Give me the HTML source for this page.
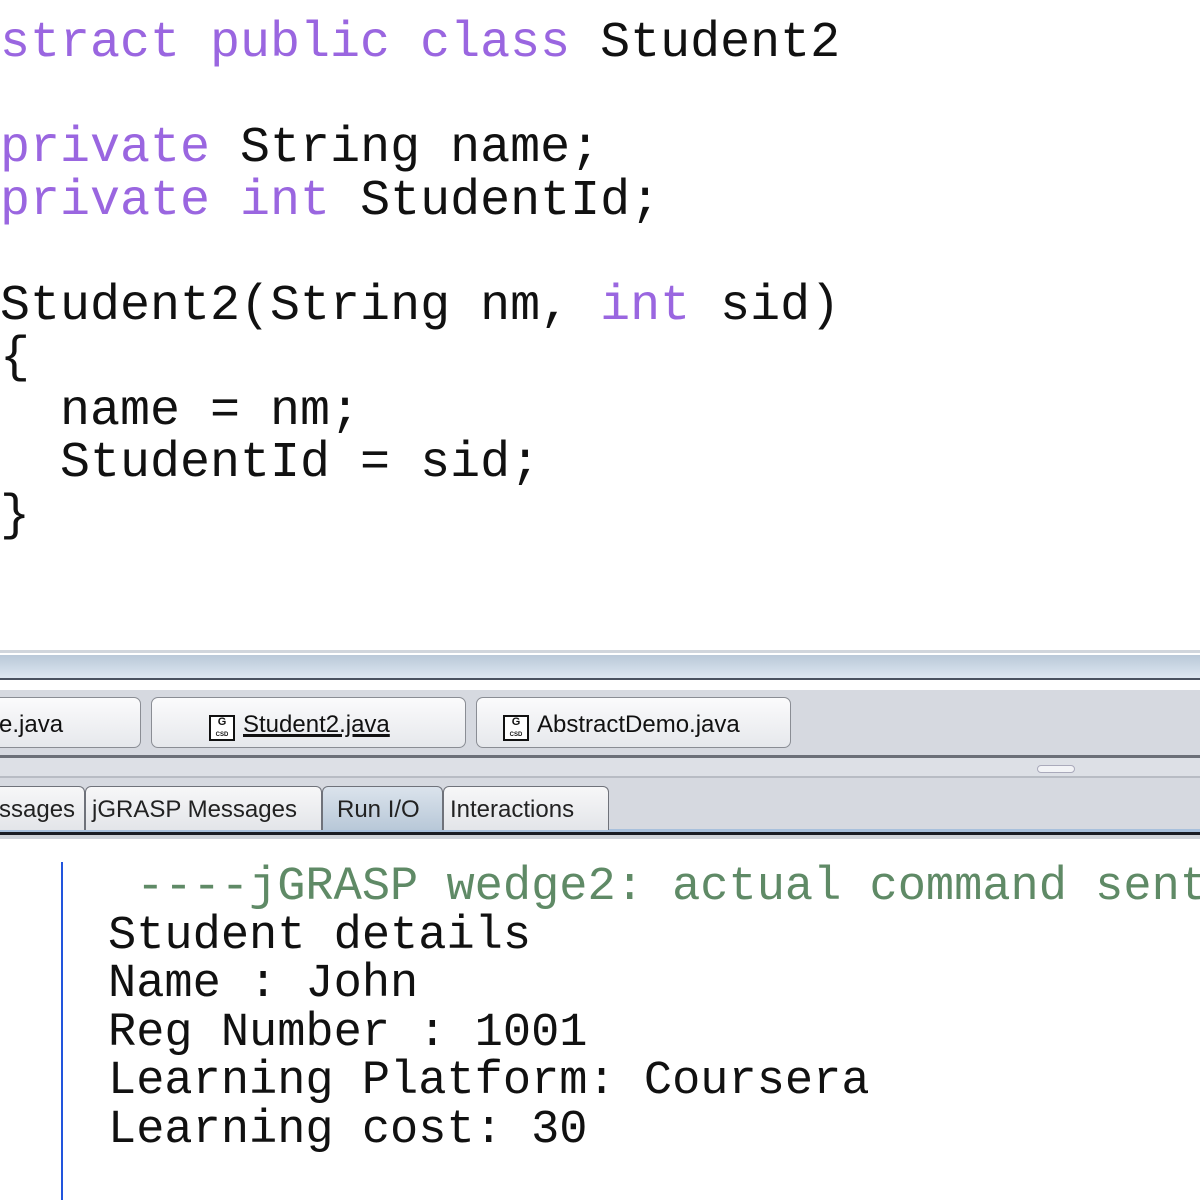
<!DOCTYPE html>
<html><head><style>
body{margin:0;width:1200px;height:1200px;overflow:hidden;background:#fff;position:relative;font-family:"Liberation Mono",monospace}
.code{position:absolute;left:0;top:18px;font-size:50px;line-height:52.5px;white-space:pre;color:#111}
.k{color:#9a66e0}
.abs{position:absolute}
.btn{position:absolute;top:697px;height:51px;border:1px solid #8a8d94;border-radius:7px;background:linear-gradient(#fbfbfc,#e6e8ec);font-family:"Liberation Sans",sans-serif;font-size:24px;line-height:53px;color:#111;box-sizing:border-box}
.ic{display:inline-block;width:26px;height:26px;border:2px solid #111;box-sizing:border-box;vertical-align:-4px;margin-right:8px;font-size:11px;line-height:11px;text-align:center;background:#fff;font-weight:bold}
.tab{position:absolute;top:786px;height:44px;border:1px solid #6f727a;border-bottom:none;border-radius:6px 6px 0 0;background:linear-gradient(#f7f7f8,#e3e5e9);font-family:"Liberation Sans",sans-serif;font-size:24px;line-height:46px;color:#222;box-sizing:border-box;padding-left:6px}
.out{position:absolute;left:108px;top:864px;font-size:47px;line-height:48.5px;white-space:pre;color:#111}
</style></head><body>
<div class="code"><span class="k">stract public class</span> Student2

<span class="k">private</span> String name;
<span class="k">private int</span> StudentId;

Student2(String nm, <span class="k">int</span> sid)
{
  name = nm;
  StudentId = sid;
}</div>
<div class="abs" style="left:0;top:650px;width:1200px;height:3px;background:#d0d5dc"></div>
<div class="abs" style="left:0;top:655px;width:1200px;height:24px;background:linear-gradient(#b9c8d8,#dfe8f2)"></div>
<div class="abs" style="left:0;top:678px;width:1200px;height:2px;background:#4a5260"></div>
<div class="abs" style="left:0;top:682px;width:1200px;height:8px;background:#fff"></div>
<div class="abs" style="left:0;top:690px;width:1200px;height:66px;background:#d6d9e0"></div>
<div class="abs" style="left:0;top:755px;width:1200px;height:3px;background:#6b6f78"></div>
<div class="abs" style="left:0;top:758px;width:1200px;height:20px;background:#dde0e6"></div>
<div class="abs" style="left:1037px;top:765px;width:36px;height:6px;border:1px solid #aab;border-radius:4px;background:#f2f3f6"></div>
<div class="abs" style="left:0;top:776px;width:1200px;height:2px;background:#b8bcc4"></div>
<div class="abs" style="left:0;top:778px;width:1200px;height:54px;background:#d6d9e0"></div>
<div class="abs" style="left:0;top:829px;width:1200px;height:3px;background:#a8c0dc"></div>
<div class="abs" style="left:0;top:832px;width:1200px;height:3px;background:#1a1d24"></div>
<div class="abs" style="left:0;top:835px;width:1200px;height:4px;background:#d0d4da"></div>

<div class="btn" style="left:-10px;width:151px;padding-left:8px">e.java</div>
<div class="btn" style="left:151px;width:315px;padding-left:57px"><span class="ic">G<br><span style="font-size:6px">CSD</span></span><span style="text-decoration:underline;text-decoration-thickness:3px">Student2.java</span></div>
<div class="btn" style="left:476px;width:315px;padding-left:26px"><span class="ic">G<br><span style="font-size:6px">CSD</span></span>AbstractDemo.java</div>

<div class="tab" style="left:-10px;width:95px;padding-left:8px">ssages</div>
<div class="tab" style="left:85px;width:237px">jGRASP Messages</div>
<div class="tab" style="left:322px;width:121px;padding-left:14px;background:linear-gradient(#dbe3ec,#b8c8d8)">Run I/O</div>
<div class="tab" style="left:443px;width:166px">Interactions</div>

<div class="abs" style="left:61px;top:862px;width:2px;height:338px;background:#2255dd"></div>
<div class="out"><span style="color:#5f8a66"> ----jGRASP wedge2: actual command sent</span>
Student details
Name : John
Reg Number : 1001
Learning Platform: Coursera
Learning cost: 30</div>
</body></html>
